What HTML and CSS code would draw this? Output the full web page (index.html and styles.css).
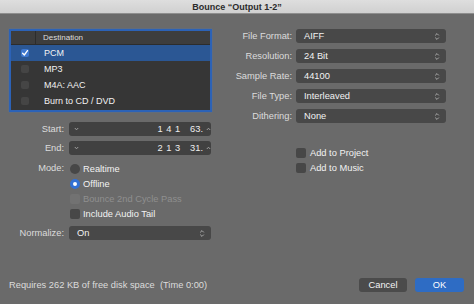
FILE: index.html
```html
<!DOCTYPE html>
<html>
<head>
<meta charset="utf-8">
<link rel="stylesheet" href="styles.css">
</head>
<body>
<div class="window">
  <div class="titlebar">Bounce “Output 1-2”</div>
  <div class="main">
    <div class="left">
      <div class="table">
        <div class="thead"><div class="cchk"></div><div class="cname">Destination</div></div>
        <div class="trow sel"><div class="cchk"><span class="tcb on"><svg width="8" height="8" viewBox="0 0 8 8"><path d="M1.6 4.2 L3.3 6 L6.5 1.6" fill="none" stroke="#fff" stroke-width="1.3" stroke-linecap="round" stroke-linejoin="round"/></svg></span></div><div class="cname">PCM</div></div>
        <div class="trow"><div class="cchk"><span class="tcb"></span></div><div class="cname">MP3</div></div>
        <div class="trow"><div class="cchk"><span class="tcb"></span></div><div class="cname">M4A: AAC</div></div>
        <div class="trow"><div class="cchk"><span class="tcb"></span></div><div class="cname">Burn to CD / DVD</div></div>
      </div>

      <div class="frow first">
        <div class="flabel">Start:</div>
        <div class="stepper">
          <svg class="chev" width="5" height="4" viewBox="0 0 5 4"><path d="M0.8 1 L2.5 2.8 L4.2 1" fill="none" stroke="#a8a8a8" stroke-width="0.9"/></svg>
          <span class="num">1 4 1</span><span class="num2">63.</span>
          <svg class="chev up" width="5" height="4" viewBox="0 0 5 4"><path d="M0.8 3 L2.5 1.2 L4.2 3" fill="none" stroke="#a8a8a8" stroke-width="0.9"/></svg>
        </div>
      </div>
      <div class="frow">
        <div class="flabel">End:</div>
        <div class="stepper">
          <svg class="chev" width="5" height="4" viewBox="0 0 5 4"><path d="M0.8 1 L2.5 2.8 L4.2 1" fill="none" stroke="#a8a8a8" stroke-width="0.9"/></svg>
          <span class="num">2 1 3</span><span class="num2">31.</span>
          <svg class="chev up" width="5" height="4" viewBox="0 0 5 4"><path d="M0.8 3 L2.5 1.2 L4.2 3" fill="none" stroke="#a8a8a8" stroke-width="0.9"/></svg>
        </div>
      </div>

      <div class="mode">
        <div class="flabel mlabel">Mode:</div>
        <div class="opts">
          <div class="opt"><span class="radio"></span><span>Realtime</span></div>
          <div class="opt"><span class="radio on"></span><span>Offline</span></div>
          <div class="opt dis"><span class="cb"></span><span>Bounce 2nd Cycle Pass</span></div>
          <div class="opt"><span class="cb"></span><span>Include Audio Tail</span></div>
        </div>
      </div>

      <div class="frow norm">
        <div class="flabel">Normalize:</div>
        <div class="popup wide"><span>On</span>
          <svg class="updown" width="6" height="9" viewBox="0 0 6 9"><path d="M1.2 3.4 L3 1.6 L4.8 3.4 M1.2 5.6 L3 7.4 L4.8 5.6" fill="none" stroke="#b4b4b4" stroke-width="0.9"/></svg>
        </div>
      </div>
    </div>

    <div class="right">
      <div class="grid">
        <div class="rlabel">File Format:</div>
        <div class="popup"><span>AIFF</span><svg class="updown" width="6" height="9" viewBox="0 0 6 9"><path d="M1.2 3.4 L3 1.6 L4.8 3.4 M1.2 5.6 L3 7.4 L4.8 5.6" fill="none" stroke="#b4b4b4" stroke-width="0.9"/></svg></div>
        <div class="rlabel">Resolution:</div>
        <div class="popup"><span>24 Bit</span><svg class="updown" width="6" height="9" viewBox="0 0 6 9"><path d="M1.2 3.4 L3 1.6 L4.8 3.4 M1.2 5.6 L3 7.4 L4.8 5.6" fill="none" stroke="#b4b4b4" stroke-width="0.9"/></svg></div>
        <div class="rlabel">Sample Rate:</div>
        <div class="popup"><span>44100</span><svg class="updown" width="6" height="9" viewBox="0 0 6 9"><path d="M1.2 3.4 L3 1.6 L4.8 3.4 M1.2 5.6 L3 7.4 L4.8 5.6" fill="none" stroke="#b4b4b4" stroke-width="0.9"/></svg></div>
        <div class="rlabel">File Type:</div>
        <div class="popup"><span>Interleaved</span><svg class="updown" width="6" height="9" viewBox="0 0 6 9"><path d="M1.2 3.4 L3 1.6 L4.8 3.4 M1.2 5.6 L3 7.4 L4.8 5.6" fill="none" stroke="#b4b4b4" stroke-width="0.9"/></svg></div>
        <div class="rlabel">Dithering:</div>
        <div class="popup"><span>None</span><svg class="updown" width="6" height="9" viewBox="0 0 6 9"><path d="M1.2 3.4 L3 1.6 L4.8 3.4 M1.2 5.6 L3 7.4 L4.8 5.6" fill="none" stroke="#b4b4b4" stroke-width="0.9"/></svg></div>
      </div>
      <div class="checks">
        <div class="opt"><span class="cb"></span><span>Add to Project</span></div>
        <div class="opt"><span class="cb"></span><span>Add to Music</span></div>
      </div>
    </div>
  </div>

  <div class="footer">
    <div class="info">Requires 262 KB of free disk space&nbsp; (Time 0:00)</div>
    <div class="buttons">
      <div class="btn cancel">Cancel</div>
      <div class="btn ok">OK</div>
    </div>
  </div>
</div>
</body>
</html>
```

FILE: styles.css
```css
html, body {
  margin: 0;
  padding: 0;
  width: 474px;
  height: 304px;
  overflow: hidden;
  background: #6a6a6a;
  font-family: "Liberation Sans", Arial, sans-serif;
  font-size: 9.3px;
  color: #ececec;
}

.window {
  display: flex;
  flex-direction: column;
  height: 304px;
}

.titlebar {
  height: 13px;
  line-height: 14px;
  border-bottom: 1px solid #8e8e8e;
  background: linear-gradient(#dedede, #d0d0d0);
  color: #2b2b2b;
  font-weight: bold;
  font-size: 9px;
  text-align: center;
}

.main {
  display: flex;
  padding: 15px 0 0 9px;
}

.left {
  width: 203px;
}

/* table */
.table {
  border: 2px solid #2c62b6;
  background: #363636;
  padding-bottom: 1px;
  box-shadow: 0 0 1px #3f78d0;
}

.thead {
  display: flex;
  height: 13px;
  line-height: 13px;
  background: #3d3d3d;
  border-bottom: 1px solid #2c2c2c;
  font-size: 8px;
  color: #dcdcdc;
}

.thead .cchk {
  border-right: 1px solid #2c2c2c;
  width: 25px;
}

.cchk {
  width: 26px;
  display: flex;
  align-items: center;
  padding-left: 10px;
  box-sizing: border-box;
}

.cname {
  padding-left: 7px;
}

.trow {
  display: flex;
  height: 16px;
  line-height: 16px;
  color: #f2f2f2;
  font-size: 9px;
}

.trow.sel {
  background: #2b5794;
}

.tcb {
  width: 8px;
  height: 8px;
  border-radius: 2px;
  background: #454545;
  display: block;
}

.tcb.on {
  background: #3d77cf;
}

.tcb svg {
  display: block;
}

/* field rows */
.frow {
  display: flex;
  align-items: center;
  height: 14px;
  margin-top: 5px;
}

.frow.first {
  margin-top: 10px;
}

.flabel {
  width: 55px;
  text-align: right;
  color: #dcdcdc;
  margin-right: 5px;
  flex: none;
}

.stepper {
  width: 142px;
  height: 14px;
  background: #414141;
  border-radius: 3px;
  display: flex;
  align-items: center;
  color: #efefef;
}

.chev {
  margin-left: 5px;
  display: block;
}

.chev.up {
  margin-left: 3px;
}

.num {
  margin-left: auto;
  word-spacing: 1px;
}

.num2 {
  margin-left: 10px;
}

/* mode */
.mode {
  display: flex;
  margin-top: 6px;
}

.mlabel {
  line-height: 15px;
}

.opts {
  display: flex;
  flex-direction: column;
}

.opt {
  display: flex;
  align-items: center;
  height: 15px;
  color: #f2f2f2;
}

.radio {
  width: 10px;
  height: 10px;
  border-radius: 50%;
  background: #474747;
  margin: 0 3px 0 1px;
  flex: none;
  box-sizing: border-box;
}

.radio.on {
  border: 3px solid #3371d4;
  background-color: #fff;
}

.cb {
  width: 10px;
  height: 10px;
  border-radius: 2px;
  background: #474747;
  margin: 0 3px 0 1px;
  flex: none;
}

.opt.dis {
  color: #8f8f8f;
}

.opt.dis .cb {
  background: #727272;
}

.frow.norm {
  margin-top: 5px;
}

/* popups */
.popup {
  height: 14px;
  background: #484848;
  border-radius: 3px;
  display: flex;
  align-items: center;
  padding: 0 6px 0 8px;
  color: #f2f2f2;
  box-sizing: border-box;
}

.popup.wide {
  width: 142px;
}

.updown {
  margin-left: auto;
  display: block;
}

/* right column */
.right {
  display: flex;
  flex-direction: column;
}

.grid {
  display: grid;
  grid-template-columns: 80px 150px;
  column-gap: 4px;
  row-gap: 6px;
}

.rlabel {
  text-align: right;
  line-height: 14px;
  color: #dcdcdc;
}

.checks {
  margin-top: 22px;
  padding-left: 83px;
  display: flex;
  flex-direction: column;
}

.checks .cb {
  margin-right: 4px;
}

/* footer */
.footer {
  margin-top: auto;
  display: flex;
  align-items: center;
  height: 14px;
  padding: 0 10px 12px 9px;
}

.info {
  color: #dcdcdc;
}

.buttons {
  margin-left: auto;
  display: flex;
  gap: 8px;
}

.btn {
  width: 48px;
  height: 14px;
  border-radius: 3px;
  display: flex;
  align-items: center;
  justify-content: center;
  color: #f4f4f4;
}

.btn.cancel {
  background: #4b4b4b;
}

.btn.ok {
  background: #2e6cc4;
  width: 49px;
  color: #fff;
}
```
